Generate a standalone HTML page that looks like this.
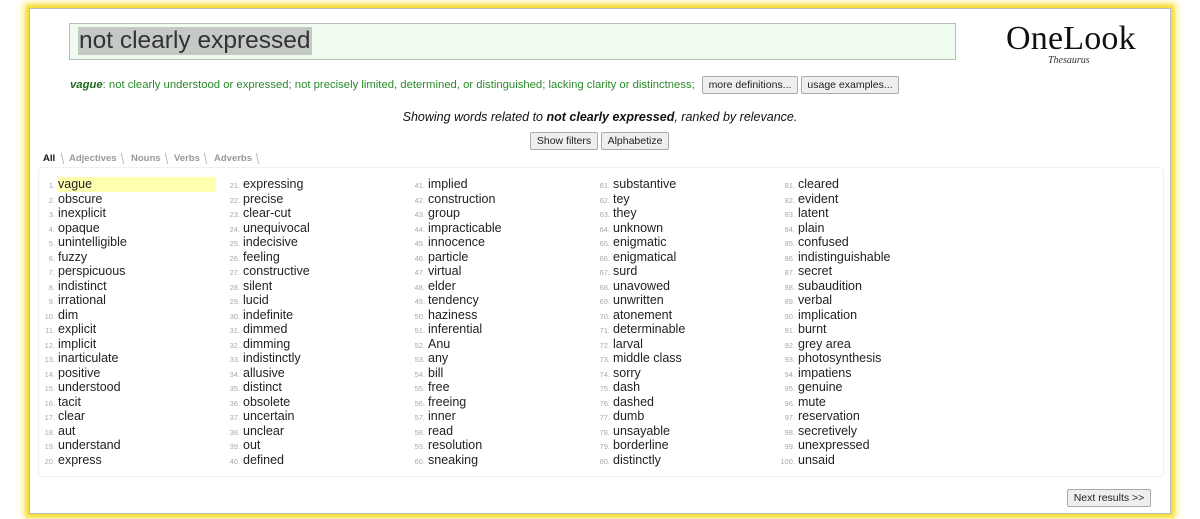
<!DOCTYPE html>
<html><head><meta charset="utf-8"><style>
body{margin:0;width:1200px;height:519px;background:#fff;font-family:"Liberation Sans",Arial,sans-serif;position:relative;overflow:hidden}
.frame{position:absolute;left:29px;top:8px;width:1140px;height:504px;border:1px solid #bbb;box-shadow:0 0 3px 3px #f5dd3a,0 0 8px 5px #fbe96a;background:#fff}
.search{position:absolute;left:69px;top:23px;width:885px;height:35px;border:1px solid #bbb;background:#f0fbf0}
.search span{position:absolute;left:8px;top:3px;font-size:24.5px;color:#333;background:#c5c9c5;line-height:28px;padding:0 1px}
.logo{position:absolute;left:1006px;top:20px;font-family:"Liberation Serif",serif;font-size:34px;color:#111;letter-spacing:0.2px}
.logo2{position:absolute;left:1048px;top:55px;font-family:"Liberation Serif",serif;font-style:italic;font-size:10px;color:#333}
.def{position:absolute;left:70px;top:79px;font-size:11.3px;color:#2a8a2a;white-space:nowrap}
.def b{color:#1a6a1a;font-style:italic}
.btn{position:absolute;border:1px solid #aaa;background:#eee;font-size:10.5px;color:#222;line-height:16px;border-radius:2px;text-align:center;box-sizing:border-box;height:18px}
.show{position:absolute;left:0;width:1200px;top:110px;text-align:center;font-size:12.5px;font-style:italic;color:#111}
.tabs{position:absolute;left:43px;top:153px;font-size:9.5px;color:#999;font-weight:bold}
.tabs span{display:inline-block;padding:0 5px 0 6px;border-right:1px solid #bbb;transform:skewX(12deg);margin-right:2px}
.tabs span i{display:inline-block;font-style:normal;transform:skewX(-12deg)}
.res{position:absolute;left:38px;top:167px;width:1124px;height:308px;border:1px solid #f0f0f0;border-radius:4px}
.col{position:absolute;top:177px;font-size:12.5px;color:#222}
.col div{white-space:nowrap;height:14.5px;line-height:14.5px}
.col u{text-decoration:none;display:inline-block;width:16px;text-align:right;font-size:7.5px;line-height:0;color:#aaa;margin-right:3px}
.hl{background:#ffffb0;display:inline-block;width:158px}
</style></head><body>
<div class="frame"></div>
<div class="search"><span>not clearly expressed</span></div>
<div class="logo">OneLook</div><div class="logo2">Thesaurus</div>
<div class="def"><b>vague</b>: not clearly understood or expressed; not precisely limited, determined, or distinguished; lacking clarity or distinctness;</div>
<div class="btn" style="left:702px;top:76px;width:96px">more definitions...</div>
<div class="btn" style="left:801px;top:76px;width:98px">usage examples...</div>
<div class="show">Showing words related to <b>not clearly expressed</b>, ranked by relevance.</div>
<div class="btn" style="left:530px;top:132px;width:68px">Show filters</div>
<div class="btn" style="left:601px;top:132px;width:68px">Alphabetize</div>
<div class="tabs"><span style="border:none;color:#111;padding-left:0"><i>All</i></span><span style="border-left:1px solid #bbb"><i>Adjectives</i></span><span><i>Nouns</i></span><span><i>Verbs</i></span><span><i>Adverbs</i></span></div>
<div class="res"></div>
<div class="col" style="left:39px">
<div><u>1.</u><span class="hl">vague</span></div><div><u>2.</u>obscure</div><div><u>3.</u>inexplicit</div><div><u>4.</u>opaque</div><div><u>5.</u>unintelligible</div><div><u>6.</u>fuzzy</div><div><u>7.</u>perspicuous</div><div><u>8.</u>indistinct</div><div><u>9.</u>irrational</div><div><u>10.</u>dim</div><div><u>11.</u>explicit</div><div><u>12.</u>implicit</div><div><u>13.</u>inarticulate</div><div><u>14.</u>positive</div><div><u>15.</u>understood</div><div><u>16.</u>tacit</div><div><u>17.</u>clear</div><div><u>18.</u>aut</div><div><u>19.</u>understand</div><div><u>20.</u>express</div></div>
<div class="col" style="left:224px">
<div><u>21.</u>expressing</div><div><u>22.</u>precise</div><div><u>23.</u>clear-cut</div><div><u>24.</u>unequivocal</div><div><u>25.</u>indecisive</div><div><u>26.</u>feeling</div><div><u>27.</u>constructive</div><div><u>28.</u>silent</div><div><u>29.</u>lucid</div><div><u>30.</u>indefinite</div><div><u>31.</u>dimmed</div><div><u>32.</u>dimming</div><div><u>33.</u>indistinctly</div><div><u>34.</u>allusive</div><div><u>35.</u>distinct</div><div><u>36.</u>obsolete</div><div><u>37.</u>uncertain</div><div><u>38.</u>unclear</div><div><u>39.</u>out</div><div><u>40.</u>defined</div></div>
<div class="col" style="left:409px">
<div><u>41.</u>implied</div><div><u>42.</u>construction</div><div><u>43.</u>group</div><div><u>44.</u>impracticable</div><div><u>45.</u>innocence</div><div><u>46.</u>particle</div><div><u>47.</u>virtual</div><div><u>48.</u>elder</div><div><u>49.</u>tendency</div><div><u>50.</u>haziness</div><div><u>51.</u>inferential</div><div><u>52.</u>Anu</div><div><u>53.</u>any</div><div><u>54.</u>bill</div><div><u>55.</u>free</div><div><u>56.</u>freeing</div><div><u>57.</u>inner</div><div><u>58.</u>read</div><div><u>59.</u>resolution</div><div><u>60.</u>sneaking</div></div>
<div class="col" style="left:594px">
<div><u>61.</u>substantive</div><div><u>62.</u>tey</div><div><u>63.</u>they</div><div><u>64.</u>unknown</div><div><u>65.</u>enigmatic</div><div><u>66.</u>enigmatical</div><div><u>67.</u>surd</div><div><u>68.</u>unavowed</div><div><u>69.</u>unwritten</div><div><u>70.</u>atonement</div><div><u>71.</u>determinable</div><div><u>72.</u>larval</div><div><u>73.</u>middle class</div><div><u>74.</u>sorry</div><div><u>75.</u>dash</div><div><u>76.</u>dashed</div><div><u>77.</u>dumb</div><div><u>78.</u>unsayable</div><div><u>79.</u>borderline</div><div><u>80.</u>distinctly</div></div>
<div class="col" style="left:779px">
<div><u>81.</u>cleared</div><div><u>82.</u>evident</div><div><u>83.</u>latent</div><div><u>84.</u>plain</div><div><u>85.</u>confused</div><div><u>86.</u>indistinguishable</div><div><u>87.</u>secret</div><div><u>88.</u>subaudition</div><div><u>89.</u>verbal</div><div><u>90.</u>implication</div><div><u>91.</u>burnt</div><div><u>92.</u>grey area</div><div><u>93.</u>photosynthesis</div><div><u>94.</u>impatiens</div><div><u>95.</u>genuine</div><div><u>96.</u>mute</div><div><u>97.</u>reservation</div><div><u>98.</u>secretively</div><div><u>99.</u>unexpressed</div><div><u>100.</u>unsaid</div></div>
<div class="btn" style="left:1067px;top:489px;width:84px">Next results &gt;&gt;</div>
</body></html>
